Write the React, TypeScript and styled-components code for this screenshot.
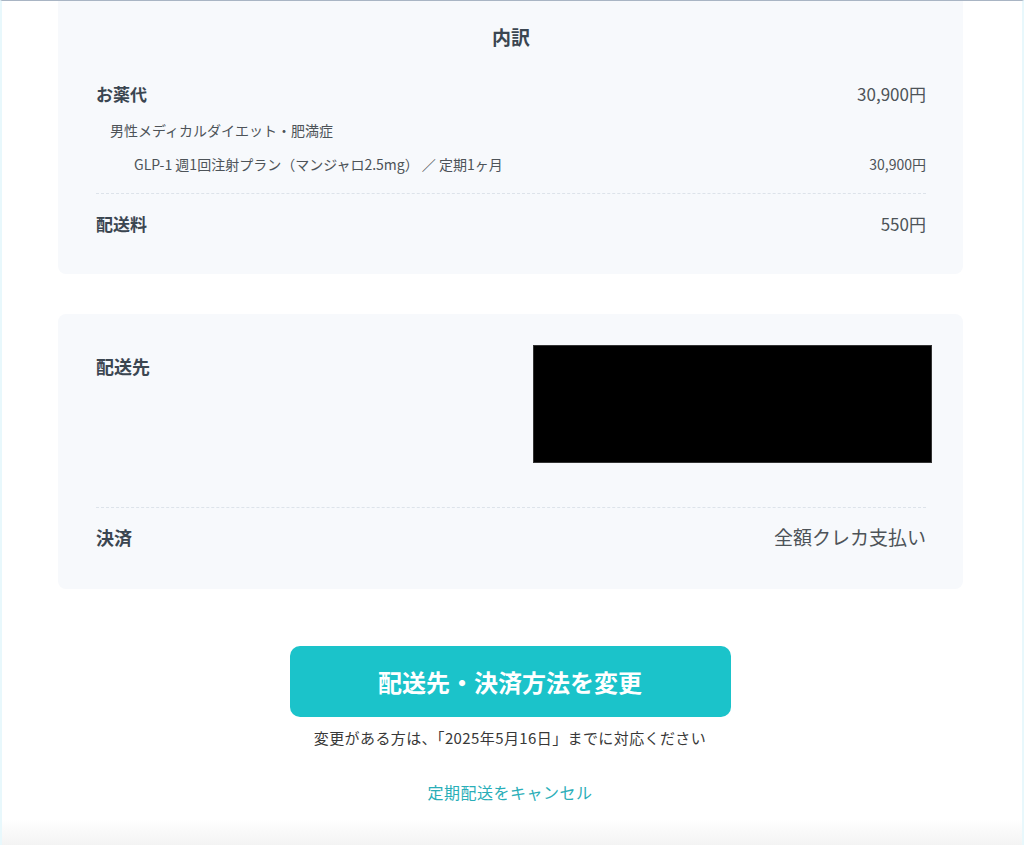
import React from 'react';
import styled, { createGlobalStyle } from 'styled-components';

const Global = createGlobalStyle`
  html, body { margin: 0; padding: 0; background: #fff; }
  body {
    font-family: "Noto Sans CJK JP", "Noto Sans", sans-serif;
    color: #3b4651;
    -webkit-font-smoothing: antialiased;
  }
`;

const Page = styled.div`
  min-height: 845px;
  box-sizing: border-box;
  border-top: 1px solid #a9b5c4;
  border-left: 2px solid #e8f8fc;
  border-right: 2px solid #e8f8fc;
  background: linear-gradient(to bottom, #fff 0, #fff 818px, #f3f3f3 845px);
  display: flex;
  flex-direction: column;
  align-items: center;
`;

const Card = styled.section<{ $cutTop?: boolean }>`
  width: 905px;
  box-sizing: border-box;
  margin-left: -3px;
  background: #f7f9fc;
  border-radius: ${({ $cutTop }) => ($cutTop ? '0 0 8px 8px' : '8px')};
  padding: ${({ $cutTop }) => ($cutTop ? '22px 37px 38px 38px' : '31px 37px 38px 38px')};
  display: flex;
  flex-direction: column;
`;

const CardTitle = styled.h2`
  margin: 0 0 31px;
  text-align: center;
  font-size: 19px;
  line-height: 28px;
  font-weight: 700;
  color: #3b4651;
`;

const Row = styled.div<{ $indent?: number; $gap?: number }>`
  display: flex;
  justify-content: space-between;
  align-items: flex-start;
  padding-left: ${({ $indent }) => $indent ?? 0}px;
  margin-top: ${({ $gap }) => $gap ?? 0}px;
`;

const Label = styled.span<{ $size?: number }>`
  font-size: ${({ $size }) => $size ?? 17}px;
  line-height: ${({ $size }) => (($size ?? 17) >= 18 ? 28 : 24)}px;
  font-weight: 700;
  color: #3b4651;
`;

const Value = styled.span<{ $size?: number }>`
  font-size: ${({ $size }) => $size ?? 17}px;
  line-height: ${({ $size }) => (($size ?? 17) >= 18 ? 28 : 24)}px;
  color: #4d5358;
`;

const Sub = styled.span`
  font-size: 14px;
  line-height: 22px;
  color: #4d5358;
`;

const Divider = styled.hr<{ $top: number; $bottom: number }>`
  border: none;
  border-top: 1px dashed #dde3ea;
  margin: ${({ $top, $bottom }) => `${$top}px 0 ${$bottom}px`};
  width: 100%;
`;

const AddressRow = styled.div`
  display: flex;
  justify-content: space-between;
  align-items: flex-start;
`;

const AddressLabel = styled(Label)`
  margin-top: 7px;
`;

const Redacted = styled.div`
  width: 399px;
  height: 118px;
  background: #000;
  margin-right: -6px;
  border: 1px solid #333;
  box-sizing: border-box;
`;

const Actions = styled.div`
  margin-top: 57px;
  display: flex;
  flex-direction: column;
  align-items: center;
  margin-left: -4px;
`;

const PrimaryButton = styled.button`
  width: 441px;
  height: 71px;
  border: none;
  border-radius: 10px;
  background: #1bc3ca;
  color: #fff;
  font-family: inherit;
  font-size: 24px;
  font-weight: 700;
  cursor: pointer;
`;

const Notice = styled.p`
  margin: 10px 0 0;
  font-size: 15px;
  line-height: 22px;
  letter-spacing: 0.4px;
  color: #383838;
`;

const CancelLink = styled.a`
  margin-top: 31px;
  font-size: 16px;
  line-height: 24px;
  letter-spacing: 0.5px;
  color: #2aaeb8;
  text-decoration: none;
  cursor: pointer;
`;

const Spacer = styled.div`
  height: 40px;
`;

export default function App() {
  return (
    <>
      <Global />
      <Page>
        <Card $cutTop>
          <CardTitle>内訳</CardTitle>
          <Row>
            <Label>お薬代</Label>
            <Value>30,900円</Value>
          </Row>
          <Row $indent={14} $gap={13}>
            <Sub>男性メディカルダイエット・肥満症</Sub>
          </Row>
          <Row $indent={38} $gap={12}>
            <Sub>GLP-1 週1回注射プラン（マンジャロ2.5mg） ／ 定期1ヶ月</Sub>
            <Sub>30,900円</Sub>
          </Row>
          <Divider $top={18} $bottom={18} />
          <Row>
            <Label>配送料</Label>
            <Value>550円</Value>
          </Row>
        </Card>
        <Spacer />
        <Card>
          <AddressRow>
            <AddressLabel $size={18}>配送先</AddressLabel>
            <Redacted />
          </AddressRow>
          <Divider $top={44} $bottom={15} />
          <Row>
            <Label $size={18}>決済</Label>
            <Value $size={19}>全額クレカ支払い</Value>
          </Row>
        </Card>
        <Actions>
          <PrimaryButton>配送先・決済方法を変更</PrimaryButton>
          <Notice>変更がある方は、「2025年5月16日」までに対応ください</Notice>
          <CancelLink>定期配送をキャンセル</CancelLink>
        </Actions>
      </Page>
    </>
  );
}
